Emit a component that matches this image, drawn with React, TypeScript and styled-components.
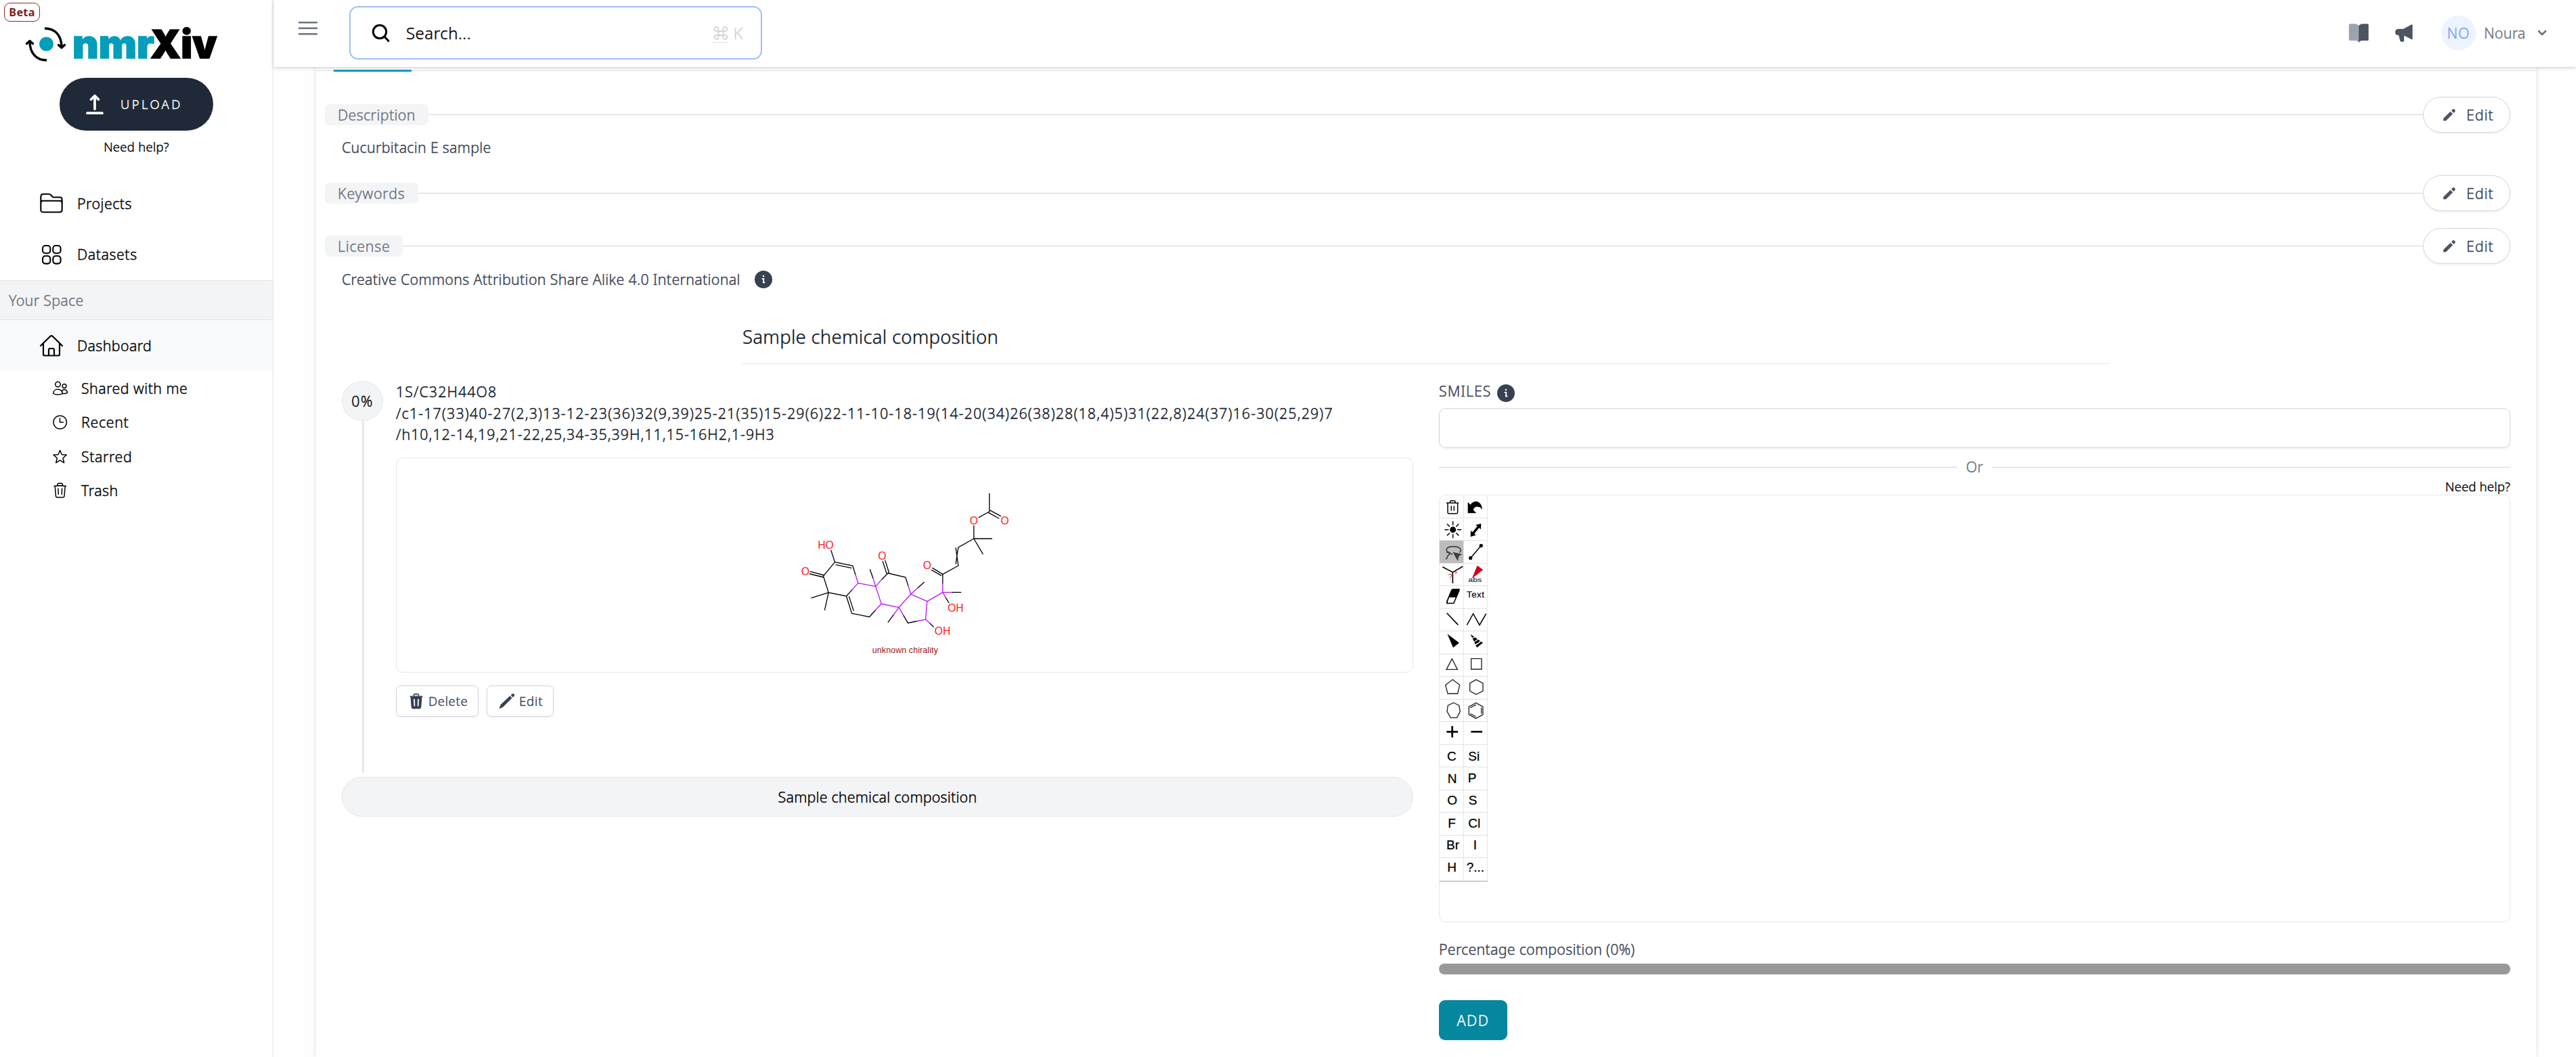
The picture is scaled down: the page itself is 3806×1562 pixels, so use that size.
import React from "react";
import styled, { createGlobalStyle, css } from "styled-components";

const Global = createGlobalStyle`
  *, *::before, *::after { box-sizing: border-box; }
  body { margin: 0; background: #fefefe; font-family: "Noto Sans", "Open Sans", sans-serif; font-size: 21.4px; color: #000; }
  svg { display: block; flex: none; }
`;

const sizes = { xs: 16.2, sm: 18.5, base: 21.4, lg: 24, xl: 27.5 };

/* The light cut sets narrower than regular, so every run is tracked out a little. */
const Text = styled.span<{ $size?: keyof typeof sizes; $ls?: number; $color?: string; $bold?: boolean; $lh?: number }>`
  font-size: ${(p) => sizes[p.$size ?? "base"]}px;
  letter-spacing: calc(${(p) => p.$ls ?? 0}px + ${(p) => (p.$bold ? "0em" : "0.0185em")});
  color: ${(p) => p.$color ?? "inherit"};
  font-weight: ${(p) => (p.$bold ? 700 : 300)};
  -webkit-text-stroke: ${(p) => (p.$bold ? 0 : 0.4)}px currentColor;
  line-height: ${(p) => p.$lh ?? 32}px;
  white-space: nowrap;
`;

const Shell = styled.div`
  display: flex;
  height: 1562px;
  overflow: hidden;
`;

/* ---------- sidebar ---------- */

const Sidebar = styled.aside`
  position: relative;
  flex: none;
  display: flex;
  flex-direction: column;
  width: 404px;
  border-right: 1px solid #e2e4e8;
  background: #fff;
`;

const Beta = styled.div`
  position: absolute;
  top: 4px;
  left: 6px;
  display: flex;
  align-items: center;
  justify-content: center;
  width: 53px;
  height: 28px;
  border: 1px solid #8f2a2a;
  border-radius: 9px;
  color: #7f1d1d;
`;

const LogoWrap = styled.div`
  margin: 30px 0 0 30px;
  height: 70px;
`;

const UploadButton = styled.button`
  display: flex;
  align-items: center;
  width: 227px;
  height: 78px;
  margin: 15px 0 0 88px;
  padding: 0 0 0 38px;
  gap: 24px;
  border: 0;
  border-radius: 39px;
  background: #1f2937;
  color: #fff;
  font-family: inherit;
  box-shadow: 0 2px 3px rgba(0, 0, 0, 0.07);
`;

const SideHelp = styled.a`
  display: flex;
  justify-content: center;
  margin-top: 11px;
`;

const NavList = styled.nav`
  display: flex;
  flex-direction: column;
  margin-top: 34px;
`;

const NavItem = styled.a<{ $active?: boolean }>`
  display: flex;
  align-items: center;
  gap: 19px;
  height: 75px;
  padding-left: 57px;
  background: ${(p) => (p.$active ? "#f9fafb" : "transparent")};
`;

const SpaceLabel = styled.div`
  display: flex;
  align-items: center;
  height: 59px;
  margin-top: 1px;
  padding-left: 13px;
  border-top: 1px solid #e2e4e8;
  border-bottom: 1px solid #e2e4e8;
  background: #f3f4f6;
`;

const SubItem = styled.a`
  display: flex;
  align-items: center;
  gap: 19px;
  height: 50.5px;
  padding: 1px 0 0 77px;
`;

/* ---------- header ---------- */

const Main = styled.div`
  flex: 1;
  display: flex;
  flex-direction: column;
  min-width: 0;
`;

const Header = styled.header`
  flex: none;
  position: relative;
  z-index: 1;
  display: flex;
  align-items: center;
  height: 99px;
  padding: 0 43px 0 37px;
  background: #fff;
  box-shadow: 0 1px 5px rgba(0, 0, 0, 0.22);
`;

const MenuButton = styled.span`
  display: flex;
  margin-bottom: 16px;
`;

const SearchBox = styled.div`
  display: flex;
  align-items: center;
  gap: 23px;
  width: 610px;
  height: 79px;
  margin: 0 0 2px 47px;
  padding: 0 26px 0 31px;
  border: 2px solid #a0bff8;
  border-radius: 13px;
`;

const SearchHint = styled.div`
  display: flex;
  align-items: center;
  gap: 7px;
  margin-left: auto;
  color: #d1d5db;
`;

const CmdKey = styled.span`
  display: flex;
  padding-bottom: 3px;
  border-bottom: 1px dotted #c3c7ce;
  margin-top: 5px;
`;

const HeaderTools = styled.div`
  display: flex;
  align-items: center;
  margin: 0 0 2px auto;
`;

const IconPair = styled.div`
  display: flex;
  align-items: center;
  gap: 38px;
`;

const Avatar = styled.div`
  display: flex;
  align-items: center;
  justify-content: center;
  width: 51px;
  height: 51px;
  margin: 0 12px 0 41px;
  border-radius: 50%;
  background: #ebf4ff;
`;

const UserName = styled.span`
  display: flex;
  width: 79px;
`;

/* ---------- card ---------- */

const Page = styled.main`
  flex: 1;
  display: flex;
  padding: 0 59px 0 63px;
`;

const Card = styled.section`
  flex: 1;
  min-width: 0;
  background: #fff;
  box-shadow: 0 0 8px rgba(0, 0, 0, 0.12);
`;

const TabBar = styled.div`
  height: 6px;
  padding: 4px 0 0 26px;
  border-bottom: 1px solid #e0e2e5;
`;

const ActiveTab = styled.div`
  position: relative;
  width: 115px;
  height: 3px;
  background: #089fba;
`;

const SectionHead = styled.div<{ $top: number }>`
  display: flex;
  align-items: center;
  height: 53px;
  margin: ${(p) => p.$top}px 38px 0 13px;
`;

const Tag = styled.span`
  display: flex;
  align-items: center;
  height: 31px;
  padding: 0 19px;
  border-radius: 7px;
  background: #f3f4f6;
`;

const Rule = styled.span`
  flex: 1;
  height: 1px;
  background: #d1d5db;
`;

const PillButton = styled.button`
  display: flex;
  align-items: center;
  gap: 15px;
  width: 129px;
  height: 53px;
  padding: 0 0 0 28px;
  border: 1px solid #d1d5db;
  border-radius: 27px;
  background: #fff;
  color: #374151;
  font-family: inherit;
  box-shadow: 0 2px 3px rgba(0, 0, 0, 0.05);
`;

const BodyLine = styled.div<{ $top: number }>`
  display: flex;
  align-items: center;
  gap: 21px;
  height: 32px;
  margin: ${(p) => p.$top}px 38px 0 38px;
`;

const CompositionHeading = styled.h2`
  margin: 49px 629px 0 630px;
  padding-bottom: 19px;
  border-bottom: 1px solid #e5e7eb;
  font-weight: 400;
  line-height: 0;
`;

const Columns = styled.div`
  display: grid;
  grid-template-columns: 1583px 1583px;
  gap: 38px;
  margin: 25px 38px 0 38px;
`;

const Entry = styled.div`
  display: flex;
  gap: 19px;
`;

const Rail = styled.div`
  flex: none;
  display: flex;
  flex-direction: column;
  align-items: center;
  width: 61px;
`;

const Percent = styled.div`
  display: flex;
  align-items: center;
  justify-content: center;
  width: 61px;
  height: 59px;
  border: 1px solid #e5e7eb;
  border-radius: 50%;
  background: #f3f4f6;
`;

const RailLine = styled.div`
  flex: 1;
  width: 3px;
  margin-left: 2px;
  background: #e5e7eb;
`;

const EntryBody = styled.div`
  flex: 1;
  min-width: 0;
  padding-bottom: 83px;
`;

const Inchi = styled.div`
  display: flex;
  flex-direction: column;
`;

const MoleculeBox = styled.div`
  display: flex;
  align-items: center;
  justify-content: center;
  height: 318px;
  margin-top: 18.5px;
  border: 1px solid #e5e7eb;
  border-radius: 10px;
`;

const Actions = styled.div`
  display: flex;
  gap: 12px;
  margin-top: 19px;
`;

const SmallButton = styled.button<{ $width: number; $pad: number; $gap: number }>`
  display: flex;
  align-items: center;
  gap: ${(p) => p.$gap}px;
  width: ${(p) => p.$width}px;
  height: 46px;
  padding: 0 0 0 ${(p) => p.$pad}px;
  border: 1px solid #d1d5db;
  border-radius: 7px;
  background: #fff;
  color: #374151;
  font-family: inherit;
  box-shadow: 0 2px 3px rgba(0, 0, 0, 0.05);
`;

const SummaryPill = styled.div`
  display: flex;
  align-items: center;
  justify-content: center;
  height: 59px;
  margin-top: 6px;
  border: 1px solid #e5e7eb;
  border-radius: 30px;
  background: #f3f4f6;
`;

const FieldLabel = styled.label`
  display: flex;
  align-items: flex-start;
  gap: 8px;
  height: 30px;
`;

const LabelIcon = styled.span`
  margin-top: 5px;
`;

const Input = styled.input`
  display: block;
  width: 100%;
  height: 59px;
  margin: 10px 0 0;
  border: 1px solid #d1d5db;
  border-radius: 10px;
  outline: 0;
  background: #fff;
  box-shadow: 0 2px 3px rgba(0, 0, 0, 0.05);
`;

const OrRow = styled.div`
  display: flex;
  align-items: center;
  gap: 13px;
  height: 30px;
  margin-top: 13px;
`;

const EditorHelp = styled.div`
  display: flex;
  justify-content: flex-end;
  margin-top: 2px;
`;

const Editor = styled.div`
  height: 632px;
  border: 1px solid #e5e7eb;
  border-radius: 10px;
  overflow: hidden;
`;

const ToolGrid = styled.div`
  display: grid;
  grid-template-columns: 35.5px 35.5px;
  grid-auto-rows: 33.5px;
  width: 71px;
  border-bottom: 1px solid #bdbdbd;
`;

const ToolCell = styled.div<{ $selected?: boolean }>`
  border-right: 1px solid #e6e6e6;
  border-bottom: 1px solid #e2e2e2;
  ${(p) => p.$selected && css`background: #bdbdbd;`}
`;

const PercentLabel = styled.div`
  display: flex;
  margin-top: 24px;
`;

const Slider = styled.div`
  height: 16px;
  margin-top: 5px;
  border-radius: 8px;
  background: #999;
`;

const AddButton = styled.button`
  display: flex;
  align-items: center;
  justify-content: center;
  width: 101px;
  height: 59px;
  margin-top: 38px;
  padding: 0;
  border: 0;
  border-radius: 9px;
  background: #0587a0;
  color: #fff;
  font-family: inherit;
  box-shadow: 0 2px 3px rgba(0, 0, 0, 0.06);
`;

/* ---------- drawings ---------- */

const Logo = () => (
  <svg width="300" height="70" viewBox="30 30 300 70">
    <circle cx="68.5" cy="65" r="10.5" fill="#049dbc" />
    <g fill="none" stroke="#000" strokeWidth="3.4">
      <path d="M66 42 C82 42 91 53 91 70" />
      <path d="M69 89 C53 89 44 78 44 61" />
      <path d="M86.500 66.500 L91 70.500 L95.500 66.500 M39.500 64.500 L44 60.500 L48.500 64.500" strokeLinejoin="round" strokeLinecap="round" />
    </g>
    <g fontFamily="Inter" fontWeight="900" fontSize="58" strokeWidth="1.500">
      <text x="107" y="86" fill="#049dbc" stroke="#049dbc" textLength="121" lengthAdjust="spacingAndGlyphs">nmr</text>
      <text x="222" y="86" fill="#000" stroke="#000" textLength="98.500" lengthAdjust="spacingAndGlyphs">Xiv</text>
    </g>
  </svg>
);

const UploadIcon = () => (
  <svg width="28" height="32" viewBox="0 0 28 32" fill="none" stroke="#fff" strokeWidth="3.800" strokeLinecap="round" strokeLinejoin="round">
    <path d="M14 23 V4 M8.500 9 L14 3.500 L19.500 9 M3 29.200 H25" />
  </svg>
);

const FolderIcon = () => (
  <svg width="38" height="34" viewBox="0 0 38 34" fill="none" stroke="#000" strokeWidth="2.100" strokeLinejoin="round">
    <path d="M3.300 15 V7 C3.300 4 5 2.700 7.500 2.700 H15 C16.500 2.700 17 3 18 4 L20.500 6.800 C21 7.400 21.500 7.500 22.500 7.500 H31 C33.500 7.500 34.700 9 34.700 11.500 V15 M6.500 12.700 H31.500 C33.700 12.700 34.700 14 34.700 16 V26 C34.700 28.500 33.500 29.500 31 29.500 H7 C4.500 29.500 3.300 28.500 3.300 26 V16 C3.300 14 4.500 12.700 6.500 12.700 Z" />
  </svg>
);

const GridIcon = () => (
  <svg width="38" height="38" viewBox="0 0 38 38" fill="none" stroke="#000" strokeWidth="2.100">
    {[[6, 6], [21.3, 6], [6, 21.3], [21.3, 21.3]].map(([x, y]) => (
      <rect key={`${x}-${y}`} x={x} y={y} width="11.300" height="11.300" rx="4" />
    ))}
  </svg>
);

const HomeIcon = () => (
  <svg width="38" height="38" viewBox="0 0 38 38" fill="none" stroke="#000" strokeWidth="2.200" strokeLinecap="round" strokeLinejoin="round">
    <path d="M3 19 L17.500 4.800 Q19 3.500 20.500 4.800 L35 19 M7 16 V31.500 Q7 33.500 9 33.500 H29 Q31 33.500 31 31.500 V16 M15 33 V25 Q15 23 17 23 H21 Q23 23 23 25 V33" />
  </svg>
);

const SharedIcon = () => (
  <svg width="24" height="24" viewBox="0 0 24 24" fill="none" stroke="#000" strokeWidth="1.500">
    <circle cx="8.500" cy="6" r="3.800" />
    <circle cx="18" cy="8.500" r="2.900" />
    <path d="M1.700 19.500 C1.700 11.300 15.300 11.300 15.300 19.500 C12 21.800 5 21.800 1.700 19.500 Z M15.300 19.800 Q20 20 22.500 18.300 C22.500 13.500 16.800 12.500 14.500 15.700" strokeLinejoin="round" />
  </svg>
);

const ClockIcon = () => (
  <svg width="24" height="24" viewBox="0 0 24 24" fill="none" stroke="#000" strokeWidth="1.500" strokeLinecap="round">
    <circle cx="11.700" cy="12" r="9.800" />
    <path d="M11.500 6 V12 H16.300" strokeLinejoin="round" />
  </svg>
);

const StarIcon = () => (
  <svg width="24" height="24" viewBox="0 0 24 24" fill="none" stroke="#000" strokeWidth="1.500" strokeLinejoin="round">
    <path d="M11.700 2.500 L14.300 8.800 L21.300 9.300 L16 14 L17.700 20.800 L11.700 17.200 L5.700 20.800 L7.400 14 L2 9.300 L9 8.800 Z" />
  </svg>
);

const TrashIcon = () => (
  <svg width="24" height="24" viewBox="0 0 24 24" fill="none" stroke="#000" strokeWidth="1.500" strokeLinecap="round" strokeLinejoin="round">
    <path d="M3 5.500 C8 4.500 15.500 4.500 20.500 5.500 M4.300 5.700 L5.500 20 Q5.700 22 7.500 22 H16 Q17.800 22 18 20 L19.200 5.700 M8 4.800 V3 Q8 1.200 10 1.200 H13.500 Q15.500 1.200 15.500 3 V4.800 M9 9 L9.300 17.500 M14.600 9 L14.300 17.500" />
  </svg>
);

const MenuIcon = () => (
  <svg width="28" height="24" viewBox="0 0 28 24" stroke="#6b7280" strokeWidth="2.500">
    <path d="M0 3.200 H28 M0 11.700 H28 M0 20.200 H28" />
  </svg>
);

const SearchIcon = () => (
  <svg width="28" height="28" viewBox="0 0 28 28" fill="none" stroke="#000" strokeWidth="3" strokeLinecap="round">
    <circle cx="12" cy="12" r="9.700" />
    <path d="M19 19 L25 25.500" />
  </svg>
);

const CommandIcon = () => (
  <svg width="22" height="20" viewBox="0 0 22 20" fill="none" stroke="#d1d5db" strokeWidth="1.900">
    <path d="M7.500 7 H14.500 V13 H7.500 Z M7.500 7 V4.200 A3 3 0 1 0 4.700 7 H7.500 M14.500 7 H17.300 A3 3 0 1 0 14.500 4.200 V7 M14.500 13 V15.800 A3 3 0 1 0 17.300 13 H14.500 M7.500 13 H4.700 A3 3 0 1 0 7.500 15.800 V13" />
  </svg>
);

const BookIcon = () => (
  <svg width="30" height="30" viewBox="0 0 30 30">
    <path d="M2 1.200 H9 C12 1.200 14.500 2.500 15 4.500 V29.500 C14.500 27.500 12.500 26 10 26 H2 Q0.500 26 0.500 24.500 V2.700 Q0.500 1.200 2 1.200 Z" fill="#9ca3af" />
    <path d="M28 1.200 H21 C18 1.200 15.500 2.500 15 4.500 V29.500 C15.500 27.500 17.500 26 20 26 H28 Q29.500 26 29.500 24.500 V2.700 Q29.500 1.200 28 1.200 Z" fill="#4b5563" />
  </svg>
);

const HornIcon = () => (
  <svg width="28" height="28" viewBox="0 0 28 28" fill="#4b5563">
    <path d="M5 7.800 H13 L24.500 1.500 Q26.500 0.800 26.500 2.500 V22 Q26.500 23.800 24.500 23 L14 17.500 V25 Q14 26.800 12.500 26.800 H10 Q8.500 26.800 8 25 L6 17 H5 C-0.500 17 -0.500 7.800 5 7.800 Z" />
  </svg>
);

const ChevronIcon = () => (
  <svg width="14" height="9" viewBox="0 0 14 9" fill="none" stroke="#6b7280" strokeWidth="2.600" strokeLinecap="round" strokeLinejoin="round">
    <path d="M2 2 L7 7 L12 2" />
  </svg>
);

const PencilIcon = () => (
  <svg width="20" height="20" viewBox="0 0 20 20" fill="#4b5563">
    <path d="M1 15 L11.500 4.700 L15 8.200 L4.800 18.500 H1.800 Q1 18.500 1 17.700 Z M12.800 3.500 L14.500 1.700 Q16.300 0.300 18 1.900 Q19.500 3.500 18.100 5.200 L16.300 7 Z" />
  </svg>
);

const LongPencilIcon = () => (
  <svg width="24" height="24" viewBox="0 0 24 24" fill="#374151">
    <path d="M2.500 17.500 L16.500 4.300 L19.500 7.500 L6 21 L1 23.200 Q0.500 23.300 0.700 22.700 Z M17.700 3.200 L19.200 1.700 Q21 0.300 22.700 1.700 Q24 3.400 22.500 5 L20.800 6.500 Z" />
  </svg>
);

const SolidTrashIcon = () => (
  <svg width="20" height="24" viewBox="0 0 20 24">
    <path d="M6 4.500 L6.500 2.500 Q7 1.500 8 1.500 H12 Q13 1.500 13.500 2.500 L14 4.500" fill="#d1d5db" stroke="#374151" strokeWidth="1.500" />
    <path d="M0.500 4.500 H19.500 V6 H18.500 L17.300 21 Q17 23.500 15 23.500 H5 Q3 23.500 2.700 21 L1.500 6 H0.500 Z" fill="#374151" />
    <path d="M7 9 L7.400 19.500 M13 9 L12.600 19.500" stroke="#fff" strokeWidth="1.800" />
  </svg>
);

const InfoIcon = () => (
  <svg width="26" height="26" viewBox="0 0 26 26">
    <circle cx="13" cy="13" r="13" fill="#374151" />
    <circle cx="13" cy="8" r="1.300" fill="#fff" />
    <path d="M11.500 12 H13.500 L12.800 17.500 H14.600" fill="none" stroke="#fff" strokeWidth="1.800" strokeLinecap="round" strokeLinejoin="round" />
  </svg>
);

const Molecule = () => (
  <svg width="400" height="300" viewBox="-10.500 -45 1200 900" fill="none" strokeWidth="4" strokeLinecap="round">
    <g stroke="#000">
      <path d="M964 88 V168 M964 168 L917 194 M968 163 L1014 188 M960 173 L1006 198 M895 231 V288 M895 288 H975 M895 288 L935 356 M895 288 L826 327 L815 399 M815 329 L826 408 M826 408 L757 446" />
      <path d="M757 446 L712 418 M751 452 L708 427 M757 446 V486 M797 526 H838 M770 549 L784 572 M700 663 L716 679 M641 654 L603 662 L583 628" />
      <path d="M646 507 L675 481 M539 626 L515 658 M448 463 L435 425 M486 470 L514 441 M508 441 L491 388 M519 438 L502 385 M514 441 L592 459 L604 497" />
      <path d="M370 447 L358 408 L279 392 L262 340 M352 418 L284 404 M279 392 L228 454 M228 459 L167 444 M230 450 L170 434 M228 454 L251 527 L330 543 L356 514 M251 527 L175 551 M251 527 L234 604 M330 543 L354 619 L432 635 L458 606 M342 545 L362 607" />
    </g>
    <g stroke="#b814ff">
      <path d="M757 486 V526 H797 M757 526 L770 549 M757 526 L688 566 L681 646 L700 663 M681 646 L641 654 M688 566 L616 534 L646 507 M616 534 L604 497 M616 534 L563 593 L583 628 M563 593 L539 626 M563 593 L485 577 L458 606 M485 577 L460 500 L448 463 M460 500 L486 470 M460 500 L382 485 L370 447 M382 485 L356 514" />
    </g>
    <g fill="#ff1a1a" stroke="none" fontFamily="Liberation Sans" fontSize="47">
      <text x="877" y="225">O</text>
      <text x="1014" y="225">O</text>
      <text x="203" y="333">HO</text>
      <text x="130" y="450">O</text>
      <text x="470" y="381">O</text>
      <text x="670" y="423">O</text>
      <text x="779" y="612">OH</text>
      <text x="721" y="714">OH</text>
    </g>
    <text x="445" y="795" fill="#a31212" stroke="none" fontFamily="Liberation Sans" fontSize="37" textLength="291">unknown chirality</text>
  </svg>
);

const glyph = (text: string, x: number, y: number) => (
  <text x={x} y={y} fontFamily="Liberation Sans" fontSize="57" fill="#000" stroke="#000" strokeWidth="0.8">{text}</text>
);

const line = (d: string, width = 4.5) => <path d={d} fill="none" stroke="#000" strokeWidth={width} />;
const thin = (d: string) => <path d={d} fill="none" stroke="#222" strokeWidth={4} />;

const tools: React.ReactNode[] = [
  line("M30 34 H84 M47 33 V28 Q47 24 51 24 H65 Q69 24 69 28 V33 M36 36 V76 Q36 81 41 81 H75 Q80 81 80 76 V36 M52 47 V68 M64 47 V68", 4.5),
  <path d="M17 30 V79 H55 L42 66 C42 54 54 46 67 52 C76 56 79 60 80 66 C83 47 70 27 54 27 C42 27 33 34 29 42 Z" />,
  <>
    <circle cx="59" cy="50.5" r="13.5" />
    {line("M59 13 V31 M59 70 V88 M22 50.500 H40 M78 50.500 H96 M33 24.500 L45 36.500 M85 24.500 L73 36.500 M33 76.500 L45 64.500 M85 76.500 L73 64.500")}
  </>,
  <path d="M76 23 L52 29 L59 35 L38 61 L30 55 L29 82 L53 74 L46 68 L67 42 L75 49 Z" />,
  <>
    <path d="M44 53 C20 46 28 26 60 26 C92 26 102 42 88 52 M44 53 C52 60 56 62 56 62 M30 52 C44 50 48 62 37 66 C29 70 40 76 27 82" fill="none" stroke="#404040" strokeWidth="5" />
    <path d="M58 50 L100 60 L86 68 L80 90 Z" fill="#404040" />
  </>,
  <>
    <circle cx="29" cy="77" r="8" />
    <circle cx="76" cy="22" r="8" />
    {line("M29 77 L76 22")}
  </>,
  <>
    {line("M13 14 L58 38 L103 12 M58 38 V87", 5)}
    <text x="38" y="69" fontFamily="Liberation Sans" fontSize="31" fill="#d9203a">?</text>
    <text x="67" y="57" fontFamily="Liberation Sans" fontSize="30" fill="#d9203a">*</text>
  </>,
  <>
    <path d="M35 66 L59 8 L85 27 Z" fill="#d0021b" />
    <text x="19" y="82" fontFamily="Liberation Sans" fontSize="26" textLength="60" lengthAdjust="spacingAndGlyphs">abs</text>
  </>,
  <>
    <path d="M58 12 H89 V20 L64 79 H30 V68 L52 16 Z" />
    <path d="M43 50 H71 L61 74 H36 V68 Z" fill="#fff" />
  </>,
  <text x="12" y="52" fontFamily="Liberation Sans" fontSize="40" stroke="#000" strokeWidth="0.500" textLength="78">Text</text>,
  line("M32 18 L82 70", 5),
  line("M13 71 L41 21 L69 71 L98 21"),
  <path d="M34 11 L87 51 L60 72 Z" />,
  <>
    <path d="M29 13 L84 51 L57 72 Z" />
    <path d="M30 32 Q45 30 53 20 M38 48 Q58 42 66 30 M45 62 Q66 55 77 39" fill="none" stroke="#fff" strokeWidth="4" />
  </>,
  thin("M55 20 L30 67 H79 Z"),
  thin("M32 19 H78 V66 H32 Z"),
  thin("M58 13 L89 37 L80 75 H36 L26 37 Z"),
  thin("M54 13 L84 29 V63 L54 79 L26 63 V29 Z"),
  thin("M62 13.500 L86 25 L91 52 L77 80 H49 L33 52 L37 25 Z"),
  thin("M53 14 L84 31 V66 L53 83 L22 66 V31 Z M53 22 L28 36 M77 35 V62 M28 62 L53 75"),
  line("M56 18 V68 M31 43 H81", 8),
  line("M31 43 H81", 8),
  glyph("C", 33, 69),
  glyph("Si", 19, 69),
  glyph("N", 35, 68),
  glyph("P", 17, 66),
  glyph("O", 34, 63),
  glyph("S", 20, 63),
  glyph("F", 37, 67),
  glyph("Cl", 19, 67),
  glyph("Br", 30, 61),
  glyph("I", 41, 61),
  glyph("H", 34, 60),
  glyph("?...", 11, 60),
];

/* ---------- page ---------- */

const Section = ({ title, top, ls }: { title: string; top: number; ls: number }) => (
  <SectionHead $top={top}>
    <Tag><Text $color="#6b7280" $ls={ls}>{title}</Text></Tag>
    <Rule />
    <PillButton>
      <PencilIcon />
      <Text $ls={0.5}>Edit</Text>
    </PillButton>
  </SectionHead>
);

export default function App() {
  return (
    <>
      <Global />
      <Shell>
        <Sidebar>
          <Beta><Text $size="xs" $bold $lh={22} $ls={0.3}>Beta</Text></Beta>
          <LogoWrap><Logo /></LogoWrap>
          <UploadButton>
            <UploadIcon />
            <Text $size="sm" $ls={3}>UPLOAD</Text>
          </UploadButton>
          <SideHelp><Text $size="sm" $lh={25} $ls={-0.1}>Need help?</Text></SideHelp>
          <NavList>
            <NavItem><FolderIcon /><Text $ls={0.05}>Projects</Text></NavItem>
            <NavItem><GridIcon /><Text $ls={0.12}>Datasets</Text></NavItem>
          </NavList>
          <SpaceLabel><Text $color="#6b7280" $ls={-0.1}>Your Space</Text></SpaceLabel>
          <NavItem $active><HomeIcon /><Text $ls={-0.05}>Dashboard</Text></NavItem>
          <SubItem><SharedIcon /><Text $ls={0.03}>Shared with me</Text></SubItem>
          <SubItem><ClockIcon /><Text $ls={0.25}>Recent</Text></SubItem>
          <SubItem><StarIcon /><Text $ls={0.16}>Starred</Text></SubItem>
          <SubItem><TrashIcon /><Text $ls={0.05}>Trash</Text></SubItem>
        </Sidebar>

        <Main>
          <Header>
            <MenuButton><MenuIcon /></MenuButton>
            <SearchBox>
              <SearchIcon />
              <Text $size="lg" $ls={0.06}>Search...</Text>
              <SearchHint>
                <CmdKey><CommandIcon /></CmdKey>
                <Text $size="lg">K</Text>
              </SearchHint>
            </SearchBox>
            <HeaderTools>
              <IconPair><BookIcon /><HornIcon /></IconPair>
              <Avatar><Text $color="#7f9cf5" $ls={0.6}>NO</Text></Avatar>
              <UserName><Text $color="#6b7280" $ls={-0.17}>Noura</Text></UserName>
              <ChevronIcon />
            </HeaderTools>
          </Header>

          <Page>
            <Card>
              <TabBar><ActiveTab /></TabBar>
              <Section title="Description" top={38} ls={-0.05} />
              <BodyLine $top={6}><Text $color="#374151" $ls={-0.13}>Cucurbitacin E sample</Text></BodyLine>
              <Section title="Keywords" top={25} ls={0.4} />
              <Section title="License" top={25} ls={0.3} />
              <BodyLine $top={7}>
                <Text $color="#374151" $ls={-0.1}>Creative Commons Attribution Share Alike 4.0 International</Text>
                <InfoIcon />
              </BodyLine>

              <CompositionHeading>
                <Text $size="xl" $lh={40} $ls={-0.24} $color="#111827">Sample chemical composition</Text>
              </CompositionHeading>

              <Columns>
                <div>
                  <Entry>
                    <Rail>
                      <Percent><Text $ls={1}>0%</Text></Percent>
                      <RailLine />
                    </Rail>
                    <EntryBody>
                      <Inchi>
                        <Text $lh={31.5} $ls={0.66} $color="#111827">1S/C32H44O8</Text>
                        <Text $lh={31.5} $ls={0.74} $color="#111827">/c1-17(33)40-27(2,3)13-12-23(36)32(9,39)25-21(35)15-29(6)22-11-10-18-19(14-20(34)26(38)28(18,4)5)31(22,8)24(37)16-30(25,29)7</Text>
                        <Text $lh={31.5} $ls={0.6} $color="#111827">/h10,12-14,19,21-22,25,34-35,39H,11,15-16H2,1-9H3</Text>
                      </Inchi>
                      <MoleculeBox><Molecule /></MoleculeBox>
                      <Actions>
                        <SmallButton $width={122} $pad={19} $gap={8}><SolidTrashIcon /><Text $size="sm" $ls={0.3}>Delete</Text></SmallButton>
                        <SmallButton $width={99} $pad={17} $gap={6}><LongPencilIcon /><Text $size="sm" $ls={0.5}>Edit</Text></SmallButton>
                      </Actions>
                    </EntryBody>
                  </Entry>
                  <SummaryPill><Text $ls={-0.2}>Sample chemical composition</Text></SummaryPill>
                </div>

                <div>
                  <FieldLabel>
                    <Text $lh={30} $ls={0.6} $color="#374151">SMILES</Text>
                    <LabelIcon><InfoIcon /></LabelIcon>
                  </FieldLabel>
                  <Input />
                  <OrRow>
                    <Rule />
                    <Text $color="#6b7280" $lh={30}>Or</Text>
                    <Rule />
                  </OrRow>
                  <EditorHelp><Text $size="sm" $lh={24} $ls={-0.15}>Need help?</Text></EditorHelp>
                  <Editor>
                    <ToolGrid>
                      {tools.map((tool, i) => (
                        <ToolCell key={i} $selected={i === 4}>
                          <svg width="35" height="33" viewBox="0 0 105 99">{tool}</svg>
                        </ToolCell>
                      ))}
                    </ToolGrid>
                  </Editor>
                  <PercentLabel><Text $color="#374151" $ls={-0.16}>Percentage composition (0%)</Text></PercentLabel>
                  <Slider />
                  <AddButton><Text $ls={1.2}>ADD</Text></AddButton>
                </div>
              </Columns>
            </Card>
          </Page>
        </Main>
      </Shell>
    </>
  );
}
